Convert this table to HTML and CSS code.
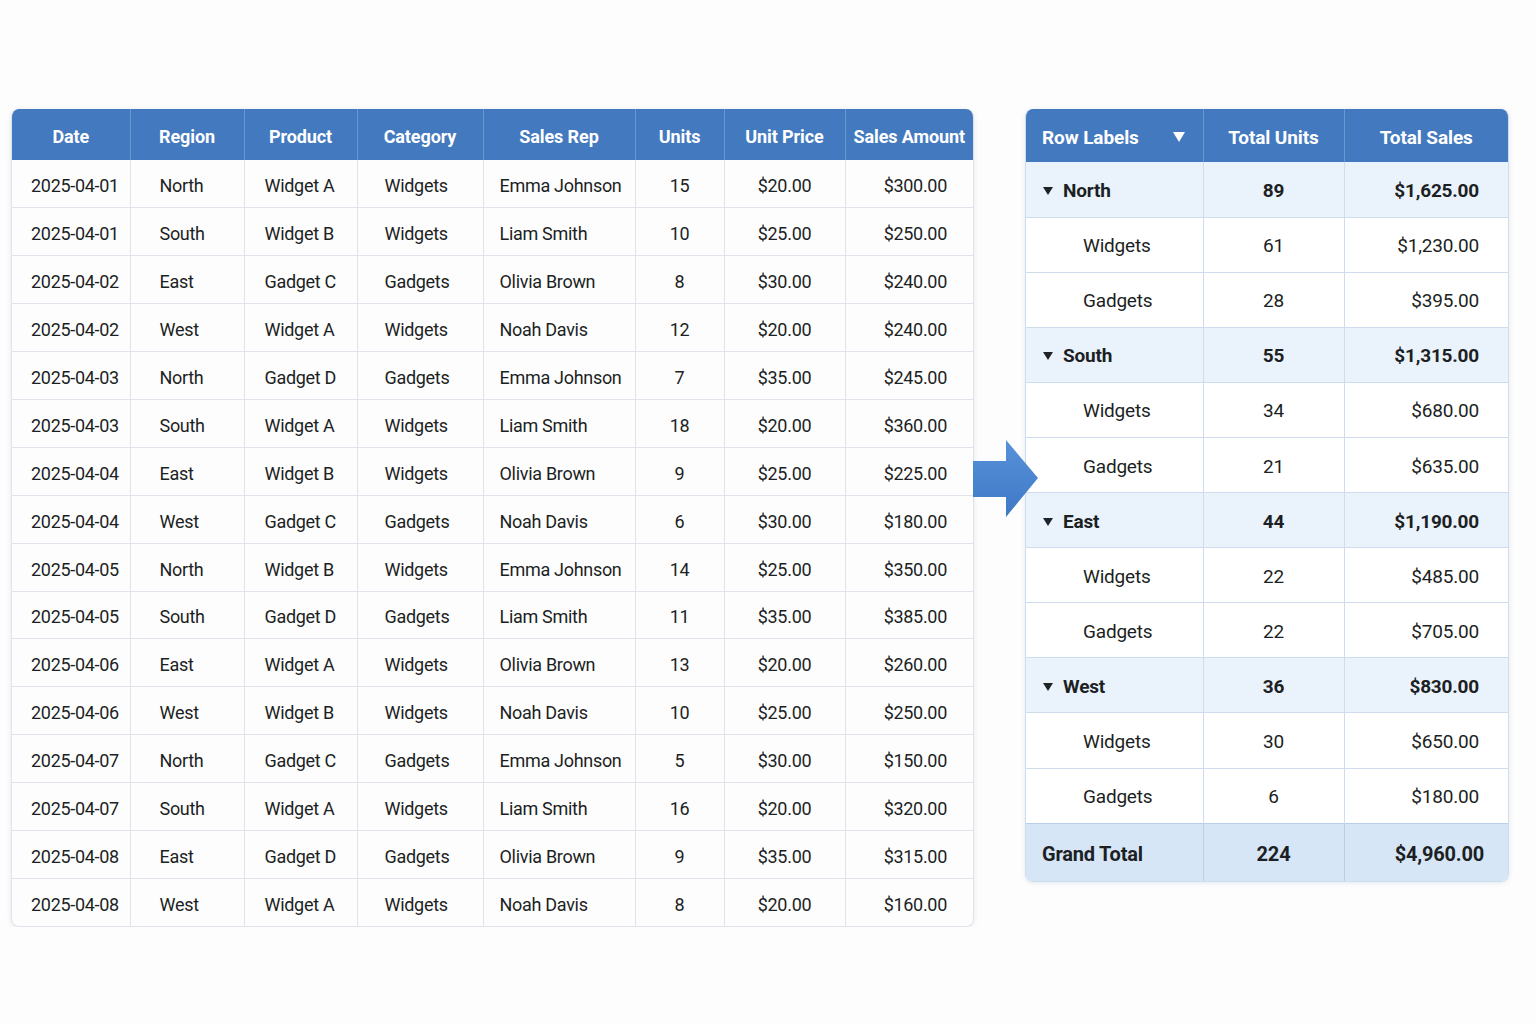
FILE: index.html
```html
<!DOCTYPE html>
<html lang="en">
<head>
<meta charset="utf-8">
<title>Sales data to pivot table</title>
<link rel="stylesheet" href="styles.css">
</head>
<body>
<div class="stage">
  <div class="card source">
    <table class="src">
      <colgroup>
        <col class="c-date"><col class="c-region"><col class="c-product"><col class="c-cat"><col class="c-rep"><col class="c-units"><col class="c-price"><col class="c-amt">
      </colgroup>
      <thead>
        <tr><th>Date</th><th>Region</th><th>Product</th><th>Category</th><th>Sales Rep</th><th>Units</th><th>Unit Price</th><th>Sales Amount</th></tr>
      </thead>
      <tbody>
        <tr><td class="d">2025-04-01</td><td class="r">North</td><td class="p">Widget A</td><td class="c">Widgets</td><td class="s">Emma Johnson</td><td class="u">15</td><td class="up">$20.00</td><td class="a">$300.00</td></tr>
        <tr><td class="d">2025-04-01</td><td class="r">South</td><td class="p">Widget B</td><td class="c">Widgets</td><td class="s">Liam Smith</td><td class="u">10</td><td class="up">$25.00</td><td class="a">$250.00</td></tr>
        <tr><td class="d">2025-04-02</td><td class="r">East</td><td class="p">Gadget C</td><td class="c">Gadgets</td><td class="s">Olivia Brown</td><td class="u">8</td><td class="up">$30.00</td><td class="a">$240.00</td></tr>
        <tr><td class="d">2025-04-02</td><td class="r">West</td><td class="p">Widget A</td><td class="c">Widgets</td><td class="s">Noah Davis</td><td class="u">12</td><td class="up">$20.00</td><td class="a">$240.00</td></tr>
        <tr><td class="d">2025-04-03</td><td class="r">North</td><td class="p">Gadget D</td><td class="c">Gadgets</td><td class="s">Emma Johnson</td><td class="u">7</td><td class="up">$35.00</td><td class="a">$245.00</td></tr>
        <tr><td class="d">2025-04-03</td><td class="r">South</td><td class="p">Widget A</td><td class="c">Widgets</td><td class="s">Liam Smith</td><td class="u">18</td><td class="up">$20.00</td><td class="a">$360.00</td></tr>
        <tr><td class="d">2025-04-04</td><td class="r">East</td><td class="p">Widget B</td><td class="c">Widgets</td><td class="s">Olivia Brown</td><td class="u">9</td><td class="up">$25.00</td><td class="a">$225.00</td></tr>
        <tr><td class="d">2025-04-04</td><td class="r">West</td><td class="p">Gadget C</td><td class="c">Gadgets</td><td class="s">Noah Davis</td><td class="u">6</td><td class="up">$30.00</td><td class="a">$180.00</td></tr>
        <tr><td class="d">2025-04-05</td><td class="r">North</td><td class="p">Widget B</td><td class="c">Widgets</td><td class="s">Emma Johnson</td><td class="u">14</td><td class="up">$25.00</td><td class="a">$350.00</td></tr>
        <tr><td class="d">2025-04-05</td><td class="r">South</td><td class="p">Gadget D</td><td class="c">Gadgets</td><td class="s">Liam Smith</td><td class="u">11</td><td class="up">$35.00</td><td class="a">$385.00</td></tr>
        <tr><td class="d">2025-04-06</td><td class="r">East</td><td class="p">Widget A</td><td class="c">Widgets</td><td class="s">Olivia Brown</td><td class="u">13</td><td class="up">$20.00</td><td class="a">$260.00</td></tr>
        <tr><td class="d">2025-04-06</td><td class="r">West</td><td class="p">Widget B</td><td class="c">Widgets</td><td class="s">Noah Davis</td><td class="u">10</td><td class="up">$25.00</td><td class="a">$250.00</td></tr>
        <tr><td class="d">2025-04-07</td><td class="r">North</td><td class="p">Gadget C</td><td class="c">Gadgets</td><td class="s">Emma Johnson</td><td class="u">5</td><td class="up">$30.00</td><td class="a">$150.00</td></tr>
        <tr><td class="d">2025-04-07</td><td class="r">South</td><td class="p">Widget A</td><td class="c">Widgets</td><td class="s">Liam Smith</td><td class="u">16</td><td class="up">$20.00</td><td class="a">$320.00</td></tr>
        <tr><td class="d">2025-04-08</td><td class="r">East</td><td class="p">Gadget D</td><td class="c">Gadgets</td><td class="s">Olivia Brown</td><td class="u">9</td><td class="up">$35.00</td><td class="a">$315.00</td></tr>
        <tr><td class="d">2025-04-08</td><td class="r">West</td><td class="p">Widget A</td><td class="c">Widgets</td><td class="s">Noah Davis</td><td class="u">8</td><td class="up">$20.00</td><td class="a">$160.00</td></tr>
      </tbody>
    </table>
  </div>

  <svg class="arrow" width="66" height="78" viewBox="0 0 66 78" aria-hidden="true">
    <defs>
      <linearGradient id="ag" x1="0" y1="0" x2="0" y2="1">
        <stop offset="0" stop-color="#5791da"/>
        <stop offset="1" stop-color="#3f78c5"/>
      </linearGradient>
    </defs>
    <polygon points="0,21 33,21 33,0 65,38 33,77 33,57 0,57" fill="url(#ag)"/>
  </svg>

  <div class="card pivot-card">
    <table class="pivot">
      <colgroup><col class="pc-label"><col class="pc-units"><col class="pc-sales"></colgroup>
      <thead>
        <tr>
          <th class="lbl"><span class="lbl-wrap"><span>Row Labels</span><span class="dd"></span></span></th>
          <th>Total Units</th>
          <th>Total Sales</th>
        </tr>
      </thead>
      <tbody>
        <tr class="grp"><td class="lbl"><span class="tri"></span>North</td><td class="num">89</td><td class="money">$1,625.00</td></tr>
        <tr class="sub"><td class="lbl">Widgets</td><td class="num">61</td><td class="money">$1,230.00</td></tr>
        <tr class="sub"><td class="lbl">Gadgets</td><td class="num">28</td><td class="money">$395.00</td></tr>
        <tr class="grp"><td class="lbl"><span class="tri"></span>South</td><td class="num">55</td><td class="money">$1,315.00</td></tr>
        <tr class="sub"><td class="lbl">Widgets</td><td class="num">34</td><td class="money">$680.00</td></tr>
        <tr class="sub"><td class="lbl">Gadgets</td><td class="num">21</td><td class="money">$635.00</td></tr>
        <tr class="grp"><td class="lbl"><span class="tri"></span>East</td><td class="num">44</td><td class="money">$1,190.00</td></tr>
        <tr class="sub"><td class="lbl">Widgets</td><td class="num">22</td><td class="money">$485.00</td></tr>
        <tr class="sub"><td class="lbl">Gadgets</td><td class="num">22</td><td class="money">$705.00</td></tr>
        <tr class="grp"><td class="lbl"><span class="tri"></span>West</td><td class="num">36</td><td class="money">$830.00</td></tr>
        <tr class="sub"><td class="lbl">Widgets</td><td class="num">30</td><td class="money">$650.00</td></tr>
        <tr class="sub"><td class="lbl">Gadgets</td><td class="num">6</td><td class="money">$180.00</td></tr>
        <tr class="total"><td class="lbl">Grand Total</td><td class="num">224</td><td class="money">$4,960.00</td></tr>
      </tbody>
    </table>
  </div>
</div>
</body>
</html>
```

FILE: styles.css
```css
* { box-sizing: border-box; }

html, body {
  margin: 0;
  padding: 0;
  background: #fdfdfe;
}

body {
  font-family: Roboto, "Noto Sans", "Liberation Sans", sans-serif;
  color: #1c1f23;
}

.stage {
  position: relative;
  display: flex;
  align-items: flex-start;
  gap: 52px;
  padding: 109px 0 0 11px;
}

.card {
  border-radius: 8px;
  overflow: hidden;
  box-shadow: 0 1px 5px rgba(30, 50, 80, 0.10);
}

.source {
  width: 963px;
  border: 1px solid #dfe2e8;
  border-top: none;
}

table {
  border-collapse: collapse;
  table-layout: fixed;
  width: 100%;
}

/* ---------- source table ---------- */
.c-date { width: 118px; }
.c-region { width: 114px; }
.c-product { width: 113px; }
.c-cat { width: 126px; }
.c-rep { width: 152px; }
.c-units { width: 89px; }
.c-price { width: 121px; }
.c-amt { width: 128px; }

.src th {
  height: 51px;
  background: #4379bf;
  color: #ffffff;
  font-size: 18px;
  font-weight: 700;
  text-align: center;
  padding: 3px 0 0;
  border-left: 1px solid #6a97d0;
  white-space: nowrap;
  letter-spacing: -0.1px;
}
.src th:first-child { border-left: none; }

.src td {
  height: 47.9px;
  font-size: 18px;
  letter-spacing: -0.3px;
  padding: 4px 0 0;
  border-top: 1px solid #e0e3e9;
  border-left: 1px solid #e0e3e9;
  white-space: nowrap;
}
.src tbody tr:first-child td { border-top: none; }
.src td:first-child { border-left: none; }

.src td.d { padding-left: 19px; }
.src td.r { padding-left: 29px; }
.src td.p { padding-left: 20px; }
.src td.c { padding-left: 27px; }
.src td.s { padding-left: 16px; }
.src td.u { text-align: center; }
.src td.up { text-align: center; }
.src td.a { text-align: right; padding-right: 26px; }

/* ---------- arrow ---------- */
.arrow {
  position: absolute;
  left: 973px;
  top: 440px;
  z-index: 2;
}

/* ---------- pivot table ---------- */
.pivot-card {
  width: 484px;
  margin-left: -1px;
  border: 1px solid #cddcee;
  border-top: none;
}

.pc-label { width: 177px; }
.pc-units { width: 141px; }
.pc-sales { width: 164px; }

.pivot th {
  height: 53px;
  background: #4379bf;
  color: #ffffff;
  font-size: 19px;
  font-weight: 700;
  text-align: center;
  padding: 3px 0 0;
  border-left: 1px solid #6a97d0;
  white-space: nowrap;
  letter-spacing: -0.1px;
}
.pivot th:first-child { border-left: none; }
.pivot th.lbl { text-align: left; padding-left: 16px; padding-right: 18px; }

.lbl-wrap {
  display: flex;
  align-items: center;
  justify-content: space-between;
}

.dd {
  width: 0;
  height: 0;
  border-left: 6px solid transparent;
  border-right: 6px solid transparent;
  border-top: 10px solid #ffffff;
}

.pivot td {
  height: 55.1px;
  font-size: 19px;
  letter-spacing: -0.2px;
  padding: 2px 0 0;
  border-top: 1px solid #cedcee;
  border-left: 1px solid #cedcee;
  white-space: nowrap;
}
.pivot tbody tr:first-child td { border-top: none; }
.pivot td:first-child { border-left: none; }

.pivot td.num { text-align: center; }
.pivot td.money { text-align: right; padding-right: 29px; }

.pivot tr.grp td {
  background: #eaf2fc;
  font-weight: 700;
}
.pivot tr.grp td.lbl {
  padding-left: 17px;
}
.tri {
  display: inline-block;
  width: 0;
  height: 0;
  border-left: 5.5px solid transparent;
  border-right: 5.5px solid transparent;
  border-top: 8px solid #1f2328;
  margin-right: 10px;
  vertical-align: 2px;
}

.pivot tr.sub td { background: #ffffff; }
.pivot tr.sub td.lbl { padding-left: 57px; }

.pivot tr.total td {
  height: 58px;
  background: #d6e6f7;
  font-weight: 700;
  font-size: 20px;
  padding-top: 3px;
  border-top: 1px solid #b9cfe9;
  border-left-color: #b9cfe9;
}
.pivot tr.total td:first-child { border-left: none; }
.pivot tr.total td.lbl { padding-left: 16px; }
.pivot tr.total td.money { padding-right: 24px; }
```
